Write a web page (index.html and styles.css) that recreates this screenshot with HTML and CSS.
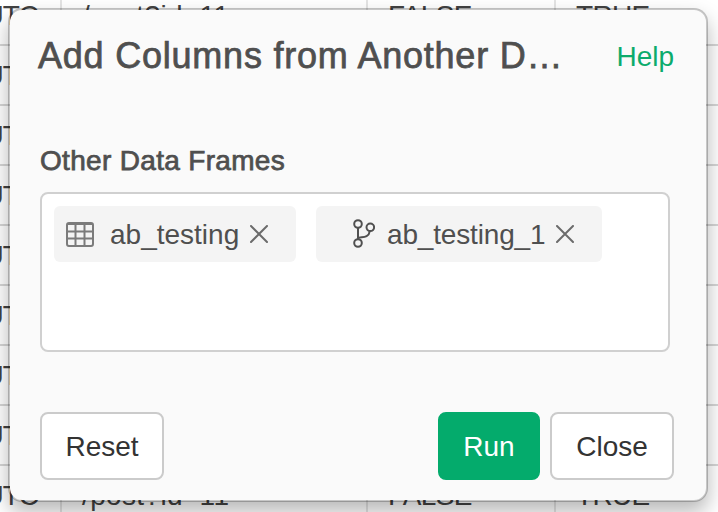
FILE: index.html
```html
<!DOCTYPE html>
<html lang="en">
<head>
<meta charset="utf-8">
<title>Add Columns</title>
<link rel="stylesheet" href="styles.css">
</head>
<body>
<div class="table" aria-hidden="true">
  <div class="row"><span class="cell zone">UTC</span><span class="cell path">/post?id=11</span><span class="cell flag">FALSE</span><span class="cell last">TRUE</span></div>
  <div class="row"><span class="cell zone">UTC</span><span class="cell path">/post?id=11</span><span class="cell flag">FALSE</span><span class="cell last">TRUE</span></div>
  <div class="row"><span class="cell zone">UTC</span><span class="cell path">/post?id=11</span><span class="cell flag">FALSE</span><span class="cell last">TRUE</span></div>
  <div class="row"><span class="cell zone">UTC</span><span class="cell path">/post?id=11</span><span class="cell flag">FALSE</span><span class="cell last">TRUE</span></div>
  <div class="row"><span class="cell zone">UTC</span><span class="cell path">/post?id=11</span><span class="cell flag">FALSE</span><span class="cell last">TRUE</span></div>
  <div class="row"><span class="cell zone">UTC</span><span class="cell path">/post?id=11</span><span class="cell flag">FALSE</span><span class="cell last">TRUE</span></div>
  <div class="row"><span class="cell zone">UTC</span><span class="cell path">/post?id=11</span><span class="cell flag">FALSE</span><span class="cell last">TRUE</span></div>
  <div class="row"><span class="cell zone">UTC</span><span class="cell path">/post?id=11</span><span class="cell flag">FALSE</span><span class="cell last">TRUE</span></div>
  <div class="row"><span class="cell zone">UTC</span><span class="cell path">/post?id=11</span><span class="cell flag">FALSE</span><span class="cell last">TRUE</span></div>
</div>
<section class="dialog" role="dialog">
  <header class="header">
    <h1 class="title">Add Columns from Another D…</h1>
    <a class="help">Help</a>
  </header>
  <h2 class="label">Other Data Frames</h2>
  <div class="frames">
    <span class="chip">
      <svg class="grid-icon" width="28" height="25" viewBox="0 0 28 25"><rect x="1" y="1" width="26" height="23" rx="2"/><path d="M1 2h26M1 9.500h26M1 16.500h26M9.500 2v22M18.500 2v22"/></svg>
      <span class="name">ab_testing</span>
      <svg class="remove" width="18" height="18" viewBox="0 0 18 18"><path d="M1 1l16 16M17 1L1 17"/></svg>
    </span>
    <span class="chip branch">
      <svg class="branch-icon" width="22" height="29" viewBox="0 0 22 29"><circle cx="5" cy="5" r="3.8"/><circle cx="5" cy="24" r="3.8"/><circle cx="17.3" cy="8.3" r="3.8"/><path d="M5 8.800v11.400M5 19.500c1.500-2.500 10.500 1 11.800-7.400"/></svg>
      <span class="name">ab_testing_1</span>
      <svg class="remove" width="18" height="18" viewBox="0 0 18 18"><path d="M1 1l16 16M17 1L1 17"/></svg>
    </span>
  </div>
  <footer class="footer">
    <button class="button reset">Reset</button>
    <button class="button run">Run</button>
    <button class="button">Close</button>
  </footer>
</section>
</body>
</html>
```
FILE: styles.css
```css
* { box-sizing: border-box; }
html, body { height: 100%; overflow: hidden; }
body {
  margin: 0;
  background: #fff;
  color: #4f4f4f;
  font: 28px/32px "Liberation Sans", Arial, sans-serif;
}
.table { margin-top: -14px; color: #424242; }
.row {
  display: grid;
  grid-template-columns: 62px 306px 188px 162px;
  height: 60px;
  border-bottom: 2px solid #d6d6d6;
}
.cell {
  display: flex;
  padding: 14px 0 0 20px;
  border-right: 2px solid #e4e4e4;
}
.zone { justify-content: flex-end; padding: 14px 22px 0 0; letter-spacing: -1px; }
.path { letter-spacing: .35px; }
.flag, .last { letter-spacing: -.7px; }
.last { border-right: 0; }
.dialog {
  position: absolute;
  top: 8px;
  left: 8px;
  display: flex;
  flex-direction: column;
  width: 700px;
  height: 494px;
  padding: 0 32px 20px 30px;
  border: 2px solid rgba(0, 0, 0, .22);
  border-radius: 14px;
  background: #fafafa;
  background-clip: padding-box;
  box-shadow: 0 10px 20px rgba(0, 0, 0, .28);
}
.header { display: flex; justify-content: space-between; height: 134px; }
.title, .label { margin: 0; font-weight: 400; white-space: nowrap; -webkit-text-stroke: .75px currentColor; }
.title { margin-left: -2px; padding-top: 24px; font-size: 36px; line-height: 44px; letter-spacing: .78px; }
.help { padding-top: 31px; color: #0cab6c; }
.label { height: 48px; font-size: 28px; line-height: 33px; letter-spacing: .32px; }
.frames {
  display: flex;
  align-items: flex-start;
  gap: 20px;
  width: 630px;
  height: 160px;
  padding: 12px;
  border: 2px solid #d0d0d0;
  border-radius: 8px;
  background: #fff;
}
.chip {
  display: flex;
  align-items: center;
  width: 242px;
  height: 56px;
  padding-left: 12px;
  border-radius: 6px;
  background: #f4f4f4;
}
.branch { width: 286px; padding-left: 37px; }
.name { margin-left: 16px; padding-top: 1px; }
.branch .name { margin-left: 12px; letter-spacing: -.16px; }
.remove { margin-left: 11px; }
svg { flex: none; fill: none; stroke-width: 2; }
.grid-icon { stroke: #7b7b7b; }
.branch-icon { margin-top: -1px; stroke: #505050; }
.remove { stroke: #6b6b6b; stroke-linecap: round; }
.footer { display: flex; gap: 10px; margin-top: 60px; }
.button {
  width: 124px;
  height: 68px;
  padding: 2px 0 0;
  border: 2px solid #cbcbcb;
  border-radius: 8px;
  background: #fff;
  color: #333;
  font: inherit;
}
.reset { margin-right: auto; }
.run { width: 102px; border-color: #04ab6c; background: #04ab6c; color: #fff; }
```
